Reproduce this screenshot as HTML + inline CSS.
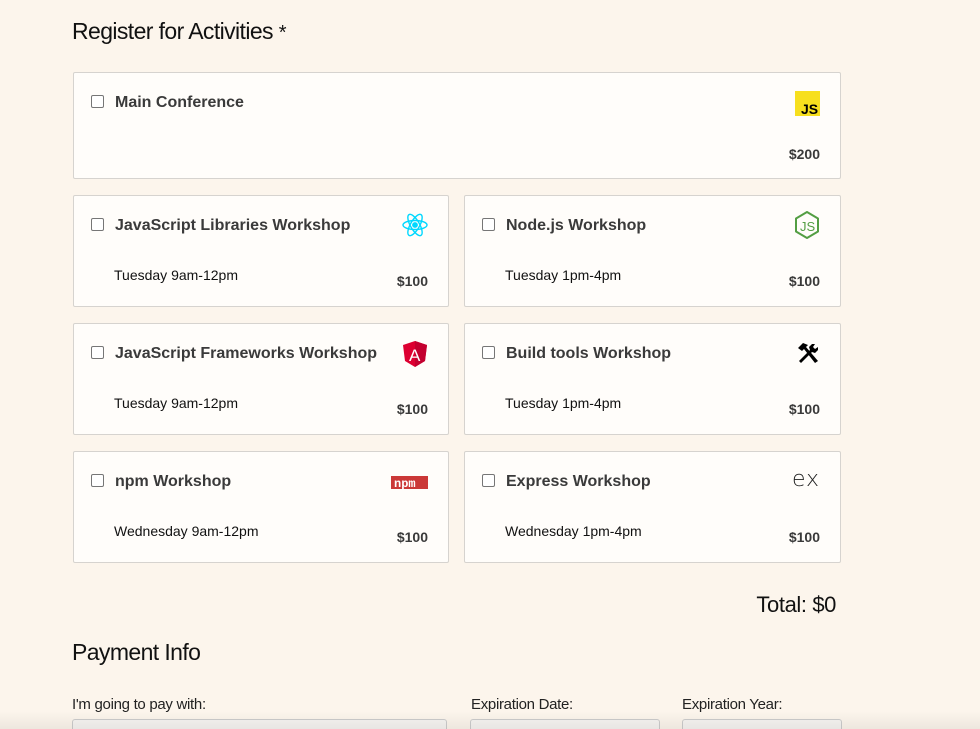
<!DOCTYPE html>
<html><head><style>
html,body{margin:0;width:980px;height:729px;overflow:hidden}
body{background:#fcf5ec;font-family:"Liberation Sans",sans-serif;position:relative}
h2{position:absolute;left:72px;margin:0;font-weight:normal;font-size:23px;color:#111;letter-spacing:-0.6px}
.card{position:absolute;background:#fffdfa;border:1px solid #d6d3cf;border-radius:2px;box-sizing:border-box}
.cb{position:absolute;left:17px;top:22px;width:11px;height:11px;border:1px solid #767676;border-radius:2px;background:#fff}
.t{position:absolute;left:41px;top:21px;font-weight:bold;font-size:16px;color:#3a3a3a}
.d{position:absolute;left:40px;top:71px;font-size:14px;color:#111}
.p{position:absolute;right:20px;top:77px;font-weight:bold;font-size:14px;color:#3a3a3a}
.ic{position:absolute;right:20px;top:16px}
.lbl{position:absolute;top:696px;font-size:15px;color:#222;letter-spacing:-0.3px}
.inp{position:absolute;top:719px;height:20px;background:#f6f4f1;border:1px solid #ccc;border-radius:3px}
</style></head><body>
<h2 style="top:18px">Register for Activities <span style="font-size:20px">*</span></h2>

<div class="card" style="left:73px;top:72px;width:768px;height:107px">
<div class="cb"></div><div class="t">Main Conference</div>
<svg class="ic" style="top:18px" width="25" height="25"><rect width="25" height="25" fill="#f7df1e"/><text x="6" y="23" font-size="14" font-weight="bold" font-family="Liberation Sans" fill="#000">JS</text></svg>
<div class="p" style="top:73px">$200</div></div>

<div class="card" style="left:73px;top:195px;width:376px;height:112px">
<div class="cb"></div><div class="t">JavaScript Libraries Workshop</div>
<svg class="ic" width="26" height="26" viewBox="-13 -13 26 26" fill="none" stroke="#00d8ff" stroke-width="1.4"><ellipse rx="12" ry="4.5"/><ellipse rx="12" ry="4.5" transform="rotate(60)"/><ellipse rx="12" ry="4.5" transform="rotate(120)"/><circle r="2.2" fill="#00d8ff"/></svg>
<div class="d">Tuesday 9am-12pm</div><div class="p">$100</div></div>

<div class="card" style="left:464px;top:195px;width:377px;height:112px">
<div class="cb"></div><div class="t">Node.js Workshop</div>
<svg class="ic" style="top:14px" width="26" height="30" viewBox="0 0 26 30"><polygon points="13,2 24,8.5 24,21.5 13,28 2,21.5 2,8.5" fill="none" stroke="#539e43" stroke-width="2" stroke-linejoin="round"/><text x="6" y="21" font-size="13" fill="#539e43" font-family="Liberation Sans">JS</text></svg>
<div class="d">Tuesday 1pm-4pm</div><div class="p">$100</div></div>

<div class="card" style="left:73px;top:323px;width:376px;height:112px">
<div class="cb"></div><div class="t">JavaScript Frameworks Workshop</div>
<svg class="ic" style="top:16px" width="26" height="28" viewBox="0 0 26 28"><polygon points="13,1 25,5 23,21 13,27 3,21 1,5" fill="#dd0031"/><polygon points="13,1 25,5 23,21 13,27" fill="#c3002f"/><text x="7" y="21" font-size="17" fill="#fff" font-family="Liberation Sans">A</text></svg>
<div class="d">Tuesday 9am-12pm</div><div class="p">$100</div></div>

<div class="card" style="left:464px;top:323px;width:377px;height:112px">
<div class="cb"></div><div class="t">Build tools Workshop</div>
<svg class="ic" style="top:18px" width="24" height="22" viewBox="0 0 24 22"><path d="M2 6 L7 1 L12 3 L10 5 L22 19 L19 21 L8 7 L6 9 Z" fill="#000"/><path d="M3 19 L14 8 L13 5 L16 2 L19 2 L17 5 L19 7 L22 5 L22 8 L19 11 L16 10 L5 21 Z" fill="#000"/></svg>
<div class="d">Tuesday 1pm-4pm</div><div class="p">$100</div></div>

<div class="card" style="left:73px;top:451px;width:376px;height:112px">
<div class="cb"></div><div class="t">npm Workshop</div>
<svg class="ic" style="top:24px" width="37" height="13"><rect width="37" height="13" fill="#cb3837"/><text x="3" y="11" font-size="12" font-weight="bold" fill="#fff" font-family="Liberation Mono">npm</text></svg>
<div class="d">Wednesday 9am-12pm</div><div class="p">$100</div></div>

<div class="card" style="left:464px;top:451px;width:377px;height:112px">
<div class="cb"></div><div class="t">Express Workshop</div>
<svg class="ic" style="top:18px" width="28" height="20"><text x="0" y="16" font-size="22" fill="#222" font-family="DejaVu Sans" font-weight="200" textLength="27">ex</text></svg>
<div class="d">Wednesday 1pm-4pm</div><div class="p">$100</div></div>

<div style="position:absolute;right:144px;top:592px;font-size:22px;color:#111;letter-spacing:-0.4px">Total: $0</div>
<h2 style="top:639px">Payment Info</h2>
<div class="lbl" style="left:72px">I'm going to pay with:</div>
<div class="lbl" style="left:471px">Expiration Date:</div>
<div class="lbl" style="left:682px">Expiration Year:</div>
<div class="inp" style="left:72px;width:373px"></div>
<div class="inp" style="left:470px;width:188px"></div>
<div class="inp" style="left:682px;width:158px"></div>
<div style="position:absolute;left:0;right:0;bottom:0;height:18px;background:linear-gradient(transparent,rgba(0,0,0,0.06))"></div>
</body></html>
